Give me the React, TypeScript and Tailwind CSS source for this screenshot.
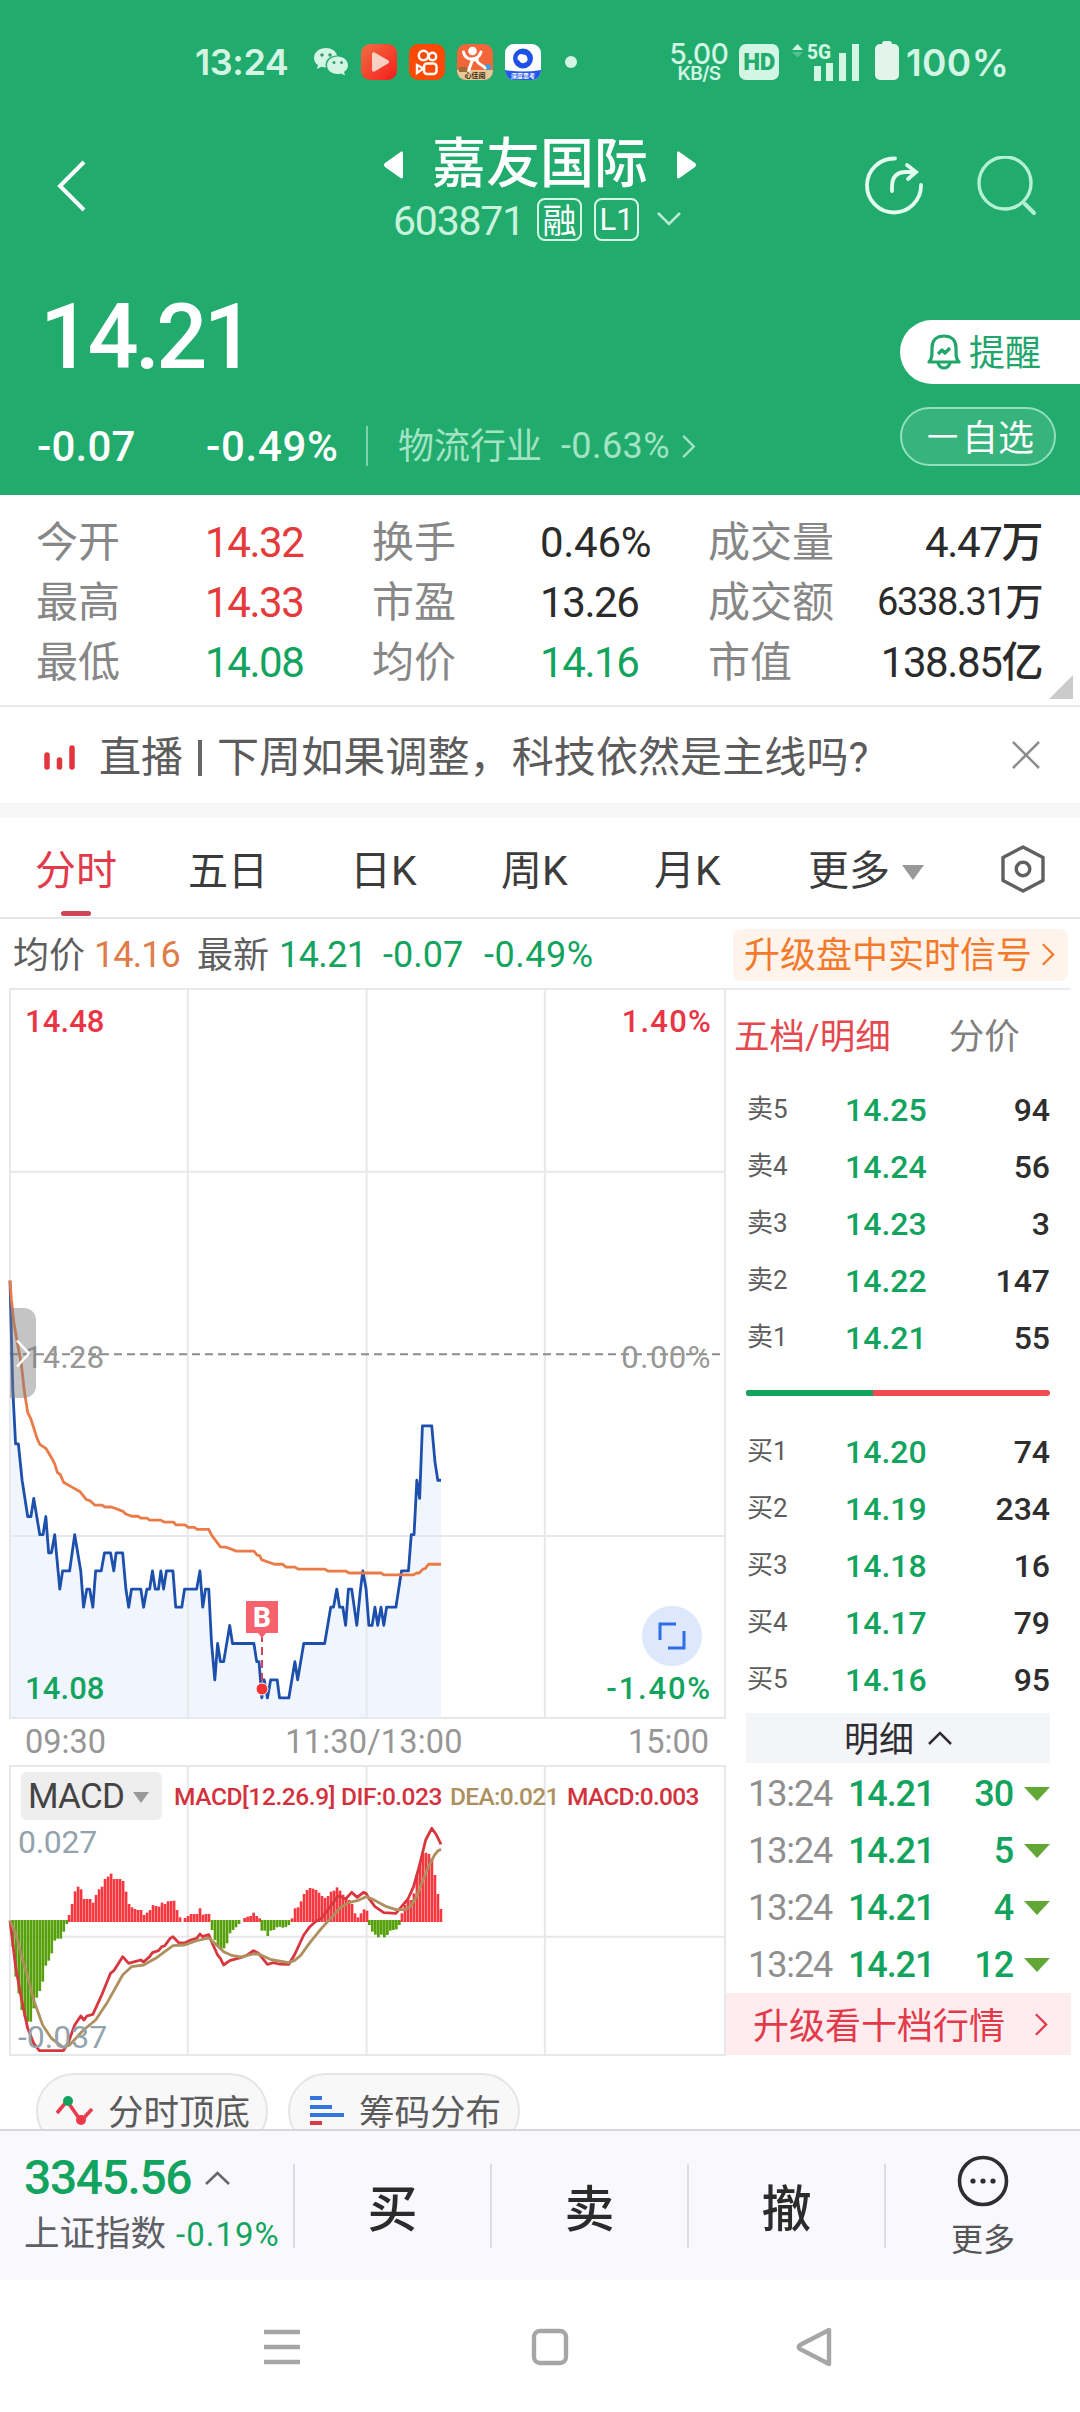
import { clsx } from 'clsx';

type Tone = 'up' | 'down' | 'plain';

const toneClass: Record<Tone, string> = {
  up: 'text-[#e53a3c]',
  down: 'text-[#12a45e]',
  plain: 'text-[#2b2b2b]',
};

const stats: { label: string; value: string; tone: Tone }[][] = [
  [{ label: '今开', value: '14.32', tone: 'up' }, { label: '换手', value: '0.46%', tone: 'plain' }, { label: '成交量', value: '4.47万', tone: 'plain' }],
  [{ label: '最高', value: '14.33', tone: 'up' }, { label: '市盈', value: '13.26', tone: 'plain' }, { label: '成交额', value: '6338.31万', tone: 'plain' }],
  [{ label: '最低', value: '14.08', tone: 'down' }, { label: '均价', value: '14.16', tone: 'down' }, { label: '市值', value: '138.85亿', tone: 'plain' }],
];

const asks = [['卖5', '14.25', '94'], ['卖4', '14.24', '56'], ['卖3', '14.23', '3'], ['卖2', '14.22', '147'], ['卖1', '14.21', '55']];
const bids = [['买1', '14.20', '74'], ['买2', '14.19', '234'], ['买3', '14.18', '16'], ['买4', '14.17', '79'], ['买5', '14.16', '95']];
const ticks = ['30', '5', '4', '12'];

// [x, cents away from the previous close]
const price: [number, number][] = [
  [22, 4], [28, -2], [34, -5], [40, -5], [48, -7], [60, -9], [67, -9], [73, -8], [86, -10], [93, -10], [99, -9], [105, -11], [111, -11], [118, -10],
  [129, -13], [135, -12], [150, -12], [161, -10], [174, -12], [180, -14], [187, -13], [193, -13], [200, -14], [206, -12], [218, -12], [225, -11],
  [238, -11], [245, -12], [250, -11], [264, -11], [271, -13], [277, -14], [283, -13], [303, -13], [309, -14], [316, -13], [322, -13], [328, -12],
  [334, -13], [341, -13], [346, -12], [352, -13], [358, -12], [372, -12], [378, -14], [391, -14], [397, -13], [423, -13], [430, -12], [436, -14],
  [442, -13], [449, -13], [455, -16], [462, -18], [468, -16], [474, -17], [481, -17], [494, -15], [500, -16], [546, -16], [552, -17], [557, -17],
  [563, -19], [568, -18], [575, -19], [582, -18], [596, -18], [601, -19], [621, -19], [634, -17], [640, -18], [653, -16], [698, -16], [711, -14],
  [717, -14], [724, -13], [730, -14], [737, -14], [743, -15], [749, -13], [756, -13], [767, -15], [775, -13], [780, -12], [787, -13], [793, -15], [800, -15],
  [806, -14], [812, -15], [819, -14], [825, -15], [831, -14], [851, -14], [863, -12], [878, -12], [884, -10], [890, -10], [896, -7], [902, -8],
  [908, -4], [928, -4], [935, -6], [941, -7], [948, -7],
];
const priceLine = price.map(([x, c]) => `${x},${770 - c * 37.4}`).join(' ');

const avgLine =
  '22,620 25,660 30,705 40,760 46,790 53,850 60,892 67,906 80,945 86,958 99,966 112,987 118,998 124,1016 130,1020 137,1036 155,1046 172,1055 186,1072 194,1074 204,1083 219,1083 226,1087 240,1087 265,1096 270,1101 283,1106 297,1106 303,1110 316,1110 322,1114 346,1114 353,1118 373,1118 379,1124 398,1124 405,1129 418,1129 424,1133 449,1133 455,1145 474,1169 487,1170 508,1178 546,1178 553,1186 558,1187 563,1196 590,1205 608,1205 615,1211 634,1211 641,1215 698,1215 705,1219 743,1219 750,1223 819,1223 825,1227 888,1227 896,1223 901,1223 909,1215 914,1214 921,1205 948,1205';

const difLine =
  '22,662 34,800 47,900 60,985 73,1030 85,1052 137,1052 148,1025 161,975 174,948 181,960 187,948 200,943 219,885 238,820 245,812 264,770 277,790 290,785 303,780 309,786 322,770 328,758 341,752 348,740 354,738 366,715 372,710 385,729 397,729 410,720 423,715 430,702 436,710 442,707 449,704 455,725 468,765 474,775 481,795 494,782 519,772 532,765 545,752 556,760 575,793 588,788 600,792 621,793 633,765 653,705 665,682 678,665 691,655 711,618 724,592 730,588 737,593 743,597 756,577 768,592 781,577 787,580 793,595 806,620 825,638 851,640 863,620 877,597 889,560 902,495 915,420 928,385 937,402 948,433';
const deaLine =
  '22,662 34,700 47,770 60,830 73,900 92,975 111,1015 137,1043 150,1035 180,990 206,960 232,905 264,825 283,800 309,795 335,775 372,737 397,735 423,722 449,714 462,730 481,755 500,767 519,771 545,762 556,762 581,778 620,788 633,782 646,767 665,730 691,685 711,655 730,625 749,608 768,602 787,590 800,597 831,620 851,629 870,629 883,618 895,590 908,545 921,500 934,465 941,453 948,448';

// runs of histogram bars: first x, then the end of every bar
const histogram: { from: number; ends: number[] }[] = [
  { from: 28, ends: [740, 830, 880, 930, 950, 965, 965, 925, 893, 873, 845, 797, 782, 760, 722, 716, 716, 695, 672] },
  { from: 149, ends: [645, 612, 574, 560, 568, 597, 597, 597, 608, 585, 568, 560, 537, 530, 521, 537, 537, 537, 543, 575, 612, 622, 627, 630, 630, 645, 638, 630, 615, 618, 620, 608, 612, 604, 603, 602, 630, 652] },
  { from: 398, ends: [654, 648, 642, 642, 642, 625, 644, 642, 642] },
  { from: 456, ends: [690, 720, 740, 748, 745, 730, 700, 690, 682, 672] },
  { from: 526, ends: [654, 650, 648, 638, 648, 655] },
  { from: 563, ends: [692, 692, 708, 692, 690, 682, 680, 683, 681, 675] },
  { from: 628, ends: [655, 625, 622, 604, 582, 570, 564, 566, 570, 578, 588, 594, 588, 575, 572, 562, 572, 584, 597, 600, 612, 640, 652, 640, 628, 632] },
  { from: 794, ends: [675, 695, 704, 712, 704, 712, 705, 692, 690, 688, 675] },
  { from: 864, ends: [640, 615, 600, 600, 580, 525, 490, 460, 458, 462, 475, 525, 582, 627] },
];

function Chevron({ className, d = 'M2 2l11 11L2 24', box = '0 0 15 26' }: { className: string; d?: string; box?: string }) {
  return (
    <svg viewBox={box} className={clsx('shrink-0', className)} fill="none" stroke="currentColor" strokeWidth="2.5">
      <path d={d} />
    </svg>
  );
}

function StatusBar() {
  return (
    <div className="flex h-[124px] items-center pl-[195px] text-[#d3f5e3]">
      <span className="w-[119px] font-['Inter'] text-[36px] leading-none font-semibold tracking-[-0.4px]">13:24</span>
      <svg width="35" height="30" viewBox="0 0 35 30" className="shrink-0" fill="currentColor">
        <path d="M12 1C5.500 1 0 5 0 11c0 3 1.600 5.400 4 7l-1 4 4.500-2.200c1.500.4 3 .6 4.500.6-2-6.500 3.500-12 11-12C22 4 17.500 1 12 1z" />
        <path d="M23.500 9.500c-6 0-10.500 4-10.500 8.800 0 5 4.500 8.700 10.500 8.700 1.200 0 2.500-.2 3.600-.6L31 28.500l-1-3.500c2.500-1.600 4-4 4-6.700 0-4.800-4.500-8.800-10.500-8.800z" />
        <g fill="#3d9a70">
          <circle cx="8" cy="8" r="1.800" />
          <circle cx="16" cy="8" r="1.800" />
          <circle cx="20" cy="15.500" r="1.500" />
          <circle cx="27.500" cy="15.500" r="1.500" />
        </g>
      </svg>
      <svg width="36" height="36" viewBox="0 0 36 36" className="ml-[12px] shrink-0">
        <defs>
          <linearGradient id="play" x1="0" y1="0" x2="1" y2="1">
            <stop offset="0" stopColor="#ef7043" />
            <stop offset="1" stopColor="#f61c1c" />
          </linearGradient>
        </defs>
        <rect width="36" height="36" rx="9" fill="url(#play)" />
        <path d="M11 10.500c0-2 1.500-2.600 3-1.800l13 7.500c1.500 1 1.500 2.400 0 3.300l-13 7.800c-1.500.9-3 .2-3-1.500z" fill="#fbd0c4" />
      </svg>
      <svg width="36" height="36" viewBox="0 0 36 36" className="ml-[12px] shrink-0">
        <rect width="36" height="36" rx="9" fill="#fc4a05" />
        <g fill="none" stroke="#fff" strokeWidth="2.400">
          <circle cx="14.500" cy="11.500" r="4.700" />
          <circle cx="23.500" cy="12.500" r="3.700" />
          <rect x="15" y="19.500" width="12.500" height="10.500" rx="3" />
          <path d="M14.500 24.500L8 21v8z" />
        </g>
      </svg>
      <svg width="36" height="36" viewBox="0 0 36 36" className="ml-[12px] shrink-0">
        <rect width="36" height="36" rx="9" fill="#f2663a" />
        <path d="M0 26h36v1a9 9 0 0 1-9 9H9a9 9 0 0 1-9-9z" fill="#e8c796" />
        <path d="M2 23h8v5H2z" fill="#9b6b3a" />
        <circle cx="31" cy="23" r="3" fill="#3f9fd8" />
        <circle cx="15.500" cy="7" r="4.300" fill="#fff" />
        <path d="M6.500 8c1 5 4 7 8 7s8-2 9.500-7M12 26c1-5 3-7 3-10h5c0 4 6 5 8 8" fill="none" stroke="#fff" strokeWidth="3" strokeLinecap="round" />
        <text x="18" y="34" fontSize="7" fontWeight="700" textAnchor="middle" fill="#3a2a14">心佳阅</text>
      </svg>
      <svg width="36" height="36" viewBox="0 0 36 36" className="ml-[12px] shrink-0">
        <rect width="36" height="36" rx="9" fill="#fff" />
        <path d="M0 26q18 3 36 0v1a9 9 0 0 1-9 9H9a9 9 0 0 1-9-9z" fill="#2558e8" />
        <circle cx="18" cy="14.500" r="10" fill="#1d52e6" />
        <path d="M18 10.500a4.300 4.300 0 1 1-3.500 6.500 3.500 3.500 0 0 1 3.500-6.500z" fill="#fff" />
        <text x="18" y="34" fontSize="6" fontWeight="700" textAnchor="middle" fill="#fff">深度思考</text>
      </svg>
      <i className="ml-6 size-3 shrink-0 rounded-full bg-[#d3f5e3]" />
      <div className="ml-[91px] flex w-[62px] flex-col items-center font-['Inter'] font-semibold">
        <span className="text-[28px] leading-[22px] font-medium tracking-[-0.400px]">5.00</span>
        <span className="text-[19px] leading-[17px] tracking-[-0.600px]">KB/S</span>
      </div>
      <span className="ml-[9px] flex h-9 w-10 items-center justify-center rounded-[7px] bg-[#d3f5e3] text-[24px] leading-none font-black tracking-[-0.500px] text-[#21ac6e]">HD</span>
      <svg width="68" height="38" viewBox="0 0 68 38" className="ml-[13px] shrink-0 overflow-visible" fill="currentColor">
        <path d="M0 7l5.500-6L11 7z" />
        <path d="M0 9h11l-5.500 5.500z" opacity=".3" />
        <text x="15" y="15.500" fontSize="20" fontWeight="800" textLength="24" lengthAdjust="spacingAndGlyphs">5G</text>
        <path d="M22 23h7v15h-7zM34 20h7v18h-7zM47 10h7v28h-7zM60 1h7v37h-7z" />
      </svg>
      <svg width="24" height="39" viewBox="0 0 24 39" className="-mt-1 ml-[15px] shrink-0" fill="#e3f5ea">
        <rect x="7" width="10" height="8" rx="3" />
        <rect y="3" width="24" height="36" rx="5" />
      </svg>
      <span className="ml-[7px] font-['Inter'] text-[37px] leading-none font-semibold tracking-[0.400px]">100%</span>
    </div>
  );
}

function Header() {
  return (
    <header className="flex h-[495px] flex-col bg-[#21ac6e] text-white">
      <StatusBar />
      <div className="flex h-[124px] items-center">
        <svg width="30" height="52" viewBox="0 0 30 52" className="ml-14 shrink-0" fill="none" stroke="currentColor" strokeWidth="4">
          <path d="M28 2L4 26l24 24" />
        </svg>
        <div className="ml-[298px] flex w-[312px] shrink-0 flex-col">
          <div className="flex h-[66px] items-center justify-between pt-[16px]">
            <svg width="19" height="28" viewBox="0 0 19 28" className="shrink-0" fill="currentColor">
              <path d="M19 2v24c0 1-1 2-2.500 1L1 16c-1.300-1-1.300-3 0-4L16.500 1c1.500-1 2.500 0 2.500 1z" />
            </svg>
            <h1 className="text-[54px] leading-[56px] font-medium">嘉友国际</h1>
            <svg width="19" height="28" viewBox="0 0 19 28" className="shrink-0" fill="currentColor">
              <path d="M0 2v24c0 1 1 2 2.500 1L18 16c1.300-1 1.300-3 0-4L2.500 1C1 0 0 1 0 2z" />
            </svg>
          </div>
          <div className="flex h-[58px] items-center pl-[9px]">
            <span className="w-[144px] pt-1 text-[41px] leading-none tracking-[-1.200px] text-[#c9f3dd]">603871</span>
            <span className="flex h-[43px] w-[45px] items-center justify-center rounded-lg border-2 border-[#d9f7e7] pt-[3px] text-[34px] leading-none">融</span>
            <span className="ml-3 flex h-[43px] w-[45px] items-center justify-center rounded-lg border-2 border-[#d9f7e7] text-[31px] leading-none">L1</span>
            <Chevron className="ml-[17px] h-[14px] w-[26px] text-[#b9ecd3]" d="M2 1l11 11L24 1" box="0 0 26 14" />
          </div>
        </div>
        <svg width="60" height="60" viewBox="0 0 60 60" className="ml-[168px] shrink-0" fill="none" stroke="#e2fbee" strokeWidth="3.800" strokeLinecap="round">
          <path d="M31 2.500A27 27 0 1 0 57 29M28 35v-4q0-15 14-15h9M43 9l9 7-8 7" />
        </svg>
        <svg width="60" height="60" viewBox="0 0 60 60" className="ml-[53px] shrink-0" fill="none" stroke="#b4f0d2" strokeWidth="3.400" strokeLinecap="round">
          <circle cx="28" cy="27" r="26" />
          <path d="M48 48l9 9" strokeWidth="4" />
        </svg>
      </div>

      <div className="flex flex-1">
        <div className="flex flex-1 flex-col">
          <strong className="mt-[45px] ml-[40px] text-[90px] leading-[90px] font-medium tracking-[-3.700px]">14.21</strong>
          <div className="mt-[33px] flex h-[60px] items-center pl-[37px] text-[42px] font-medium">
            <span className="w-[169px] tracking-[0.200px]">-0.07</span>
            <span className="w-[160px] tracking-[0.700px]">-0.49%</span>
            <i className="h-10 w-[2px] bg-[#7fd3ac]" />
            <span className="ml-[30px] pt-[2px] text-[36px] font-normal text-[#a2e3c3]">物流行业</span>
            <span className="ml-[19px] w-[113px] text-[36px] font-normal tracking-[0.400px] text-[#a2e3c3]">-0.63%</span>
            <Chevron className="ml-[7px] h-[25px] w-[15px] text-[#a2e3c3]" />
          </div>
        </div>
        <div className="flex w-[180px] flex-col pt-[72px]">
          <button className="flex h-[64px] items-center rounded-l-full bg-white pl-[27px] text-[36px] text-[#21a56a]">
            <svg width="34" height="36" viewBox="0 0 34 36" fill="none" stroke="currentColor" strokeWidth="3.200" strokeLinejoin="round">
              <path d="M2 28c3-3 3-6 3-14C5 6 10 2 17 2s12 4 12 12c0 8 0 11 3 14zM2 28h30M11 29c1 3 3 5 6 5s5-2 6-5M11 20l4-4 3 3 5-5" />
            </svg>
            <span className="ml-2 pt-[3px]">提醒</span>
          </button>
          <button className="mt-[23px] flex h-[59px] w-[156px] items-center rounded-full border-2 border-[#93dfbb] bg-[#37b37c] pt-[4px] pl-[25px] text-[36px]">
            <span className="text-[31px]">一</span>
            <span className="ml-[4px]">自选</span>
          </button>
        </div>
      </div>
    </header>
  );
}

function Stats() {
  return (
    <section className="flex h-[212px] flex-col border-b-2 border-[#e9e9eb] pt-[17px]">
      {stats.map((row, i) => (
        <div key={row[0].label} className="flex h-[60px] items-center pr-[38px] pl-[36px] text-[42px]">
          {row.map((cell, j) => (
            <div key={cell.label} className={clsx('flex items-center', j === 0 && 'w-[336px]', j === 1 && 'w-[336px]', j === 2 && 'flex-1 justify-between')}>
              <span className={clsx('text-[#878787]', j === 0 && 'w-[169px]', j === 1 && 'w-[168px]')}>{cell.label}</span>
              <span
                className={clsx(
                  'font-[450]',
                  toneClass[cell.tone],
                  cell.value.endsWith('%') ? 'tracking-[-0.300px]' : 'tracking-[-1.400px]',
                  i === 1 && j === 2 && 'text-[38px]',
                )}
              >
                {cell.value}
              </span>
            </div>
          ))}
        </div>
      ))}
      <svg width="24" height="24" viewBox="0 0 24 24" className="-mt-[17px] mr-[7px] shrink-0 self-end" fill="#cbcbcb">
        <path d="M24 0v24H0z" />
      </svg>
    </section>
  );
}

function Notice() {
  return (
    <section className="flex h-[111px] items-center border-b-[15px] border-[#f7f7f7] pt-[5px] pl-[44px] text-[42px] text-[#5c5c5c]">
      <svg width="31" height="27" viewBox="0 0 31 27" className="shrink-0" fill="none" stroke="#e2363c" strokeWidth="5.500" strokeLinecap="round">
        <path d="M3 11v12M15.500 16v7M28 4v19" />
      </svg>
      <span className="ml-[24px]">直播</span>
      <i className="mx-[15px] h-9 w-[4px] bg-[#666]" />
      <span className="tracking-[0.100px]">下周如果调整，科技依然是主线吗?</span>
      <svg width="28" height="28" viewBox="0 0 28 28" className="mr-10 mb-[5px] ml-auto shrink-0" stroke="#8d8d8d" strokeWidth="2.500">
        <path d="M1 1l26 26M27 1L1 27" />
      </svg>
    </section>
  );
}

function Tabs() {
  return (
    <nav className="flex h-[101px] items-center border-b-2 border-[#e6e6e8] pt-[9px] text-[41px] text-[#3c3c3c]">
      <button className="relative ml-[35px] w-[153px] text-left text-[#e23a4a]">
        分时
        <i className="absolute top-[70px] left-[26px] h-[5px] w-[30px] rounded-sm bg-[#d04456]" />
      </button>
      <span className="w-[162px] text-[40px]">五日</span>
      <span className="w-[151px]">日K</span>
      <span className="w-[153px]">周K</span>
      <span className="w-[154px]">月K</span>
      <span>更多</span>
      <svg width="22" height="15" viewBox="0 0 22 15" className="ml-[12px]" fill="#999">
        <path d="M0 0h22L11 15z" />
      </svg>
      <svg width="44" height="48" viewBox="0 0 44 48" className="mb-[6px] ml-[77px]" fill="none" stroke="#606060" strokeWidth="3.400" strokeLinejoin="round">
        <path d="M22 2l20 10.500v23L22 46 2 35.500v-23z" />
        <circle cx="22" cy="24" r="6.800" />
      </svg>
    </nav>
  );
}

function QuoteLine() {
  return (
    <div className="flex h-[69px] items-center pt-[2px] pr-3 pl-[13px] text-[36px]">
      <span className="pt-[2px] text-[#5e5e5e]">均价</span>
      <span className="w-[112px] pl-[9px] tracking-[-0.900px] text-[#de7c4a]">14.16</span>
      <span className="pt-[2px] text-[#5e5e5e]">最新</span>
      <span className="w-[114px] pl-[10px] font-[450] tracking-[-0.600px] text-[#12a45e]">14.21</span>
      <span className="w-[101px] font-[450] text-[#12a45e]">-0.07</span>
      <span className="font-[450] tracking-[0.500px] text-[#12a45e]">-0.49%</span>
      <button className="ml-auto flex h-[52px] w-[335px] items-center rounded-lg bg-[#fff4ec] pl-[11px] text-[#f37a2b]">
        <span className="pt-[3px]">升级盘中实时信号</span>
        <Chevron className="ml-[9px] h-[25px] w-[14px]" />
      </button>
    </div>
  );
}

function PriceChart() {
  return (
    <div className="relative h-[729px] w-[715px]">
      <svg viewBox="22 19 1536 1503" preserveAspectRatio="none" width="715" height="729" fill="none" className="overflow-visible">
        <polygon points={`22,1522 ${priceLine} 948,1522`} fill="#f0f5fe" />
        <path d="M22 19H1558V1522H22zM22 396H1558M22 1147H1558M404 19V1522M788 19V1522M1171 19V1522" stroke="#e7e8ea" strokeWidth="2" vectorEffect="non-scaling-stroke" />
        <path d="M22 772H1558" stroke="#8c8c8c" strokeWidth="1.800" strokeDasharray="8 5" vectorEffect="non-scaling-stroke" />
        <polyline points={priceLine} stroke="#1c50ac" strokeWidth="2.800" strokeLinejoin="round" vectorEffect="non-scaling-stroke" />
        <polyline points={avgLine} stroke="#ea7b46" strokeWidth="2.800" strokeLinejoin="round" vectorEffect="non-scaling-stroke" />
      </svg>
      <div className="absolute inset-0 flex flex-col justify-between pt-[15px] pr-[13px] pb-[11px] pl-[15px] text-[31px] leading-[36px]">
        <div className="flex justify-between font-medium text-[#e93546]"><span className="tracking-[0.100px]">14.48</span><span className="tracking-[1.200px]">1.40%</span></div>
        <div className="flex translate-y-[2px] justify-between text-[#979797]"><span className="tracking-[0.300px]">14.28</span><span className="tracking-[1.500px]">0.00%</span></div>
        <div className="flex justify-between font-medium text-[#12a45e]"><span className="tracking-[0.100px]">14.08</span><span className="tracking-[1.800px]">-1.40%</span></div>
      </div>
      <div className="absolute top-[319px] left-0 flex h-[90px] w-[26px] items-center rounded-r-[12px] bg-[#7d7d7d]/45">
        <Chevron className="ml-[6px] h-[31px] w-[15px] text-white" d="M1 1l12 13L1 27" box="0 0 15 28" />
      </div>
      <svg width="34" height="100" viewBox="0 0 34 100" className="absolute top-[611px] left-[235px]">
        <path d="M17 34v54" stroke="#d8405a" strokeWidth="2" strokeDasharray="8 5" />
        <path d="M1 1h32v32H21l-4 5-4-5H1z" fill="#f5616d" />
        <text x="17" y="27" fontSize="28" fontWeight="800" textAnchor="middle" fill="#fff">B</text>
        <circle cx="17" cy="89" r="6" fill="#f23434" stroke="#fff" />
      </svg>
      <div className="absolute top-[617px] right-[23px] flex size-[60px] items-center justify-center rounded-full bg-[#dee8fc]">
        <svg width="28" height="28" viewBox="0 0 28 28" fill="none" stroke="#2f6fe4" strokeWidth="3">
          <path d="M2 18V2h16M26 9v17H10" />
        </svg>
      </div>
    </div>
  );
}

function MacdChart() {
  return (
    <div className="relative h-[289px] w-[715px]">
      <svg viewBox="22 198 1536 867" preserveAspectRatio="none" width="715" height="289" fill="none" className="overflow-visible">
        <path d="M22 198H1558V1065H22zM22 710H1558M404 198V1065M788 198V1065M1171 198V1065" stroke="#e7e8ea" strokeWidth="2" vectorEffect="non-scaling-stroke" />
        {histogram.map(({ from, ends }) =>
          ends.map((end, i) => (
            <rect
              key={`${from}-${i}`}
              x={from + i * 6.44 - 2.9}
              y={end > 662 ? 660 : end}
              width="5.800"
              height={end > 662 ? end - 660 : 666 - end}
              fill={end > 662 ? '#56a00c' : '#f5383f'}
            />
          )),
        )}
        <polyline points={difLine} stroke="#d8373f" strokeWidth="2.800" strokeLinejoin="round" vectorEffect="non-scaling-stroke" />
        <polyline points={deaLine} stroke="#ad905e" strokeWidth="2.800" strokeLinejoin="round" vectorEffect="non-scaling-stroke" />
      </svg>
      <div className="absolute inset-x-0 top-[6px] flex items-center text-[24.500px] font-medium whitespace-pre">
        <button className="ml-[11px] flex h-[48px] w-[141px] items-center rounded-md bg-[#eeeeef] pt-[3px] pl-[7px] text-[35px] font-normal tracking-[-0.800px] text-[#444]">
          MACD
          <svg width="16" height="11" viewBox="0 0 16 11" className="ml-[9px]" fill="#999">
            <path d="M0 0h16L8 11z" />
          </svg>
        </button>
        <span className="ml-[12px] w-[167px] pt-[2px] tracking-[-0.400px] text-[#d3323c]">MACD[12.26.9]</span>
        <span className="w-[109px] pt-[2px] tracking-[-0.500px] text-[#d3323c]">DIF:0.023</span>
        <span className="w-[117px] pt-[2px] tracking-[-0.700px] text-[#ad905e]">DEA:0.021</span>
        <span className="pt-[2px] tracking-[-0.700px] text-[#d3323c]">MACD:0.003</span>
      </div>
      <span className="absolute top-[57px] left-2 text-[32px] leading-[38px] tracking-[-0.300px] text-[#93a3ae]">0.027</span>
      <span className="absolute top-[252px] left-2 text-[32px] leading-[38px] text-[#93a3ae]">-0.037</span>
    </div>
  );
}

function Level({ row }: { row: string[] }) {
  return (
    <div className="flex h-[57px] items-center pr-[21px] pl-[22px] text-[32px] font-medium">
      <span className="w-[98px] text-[26px] font-normal text-[#5c5c5c]">{row[0]}</span>
      <span className="text-[#12a45e]">{row[1]}</span>
      <span className="ml-auto text-[#2e2e2e]">{row[2]}</span>
    </div>
  );
}

function OrderBook() {
  return (
    <aside className="flex h-[1067px] w-[346px] flex-col border-t-2 border-[#e7ecf3]">
      <div className="flex h-[91px] items-center pt-[5px] pl-[9px] text-[35.500px]">
        <span className="text-[#e4494f]">五档/明细</span>
        <span className="ml-[58px] text-[#808080]">分价</span>
      </div>
      {asks.map((row) => <Level key={row[0]} row={row} />)}
      <div className="mx-[21px] mt-[24px] mb-[27px] flex h-[6px] shrink-0 overflow-hidden rounded-full bg-[#f04b50]">
        <i className="w-[127px] bg-[#12a45e]" />
      </div>
      {bids.map((row) => <Level key={row[0]} row={row} />)}
      <button className="mx-[21px] mt-[5px] mb-[2px] flex h-[50px] shrink-0 items-center justify-center bg-[#f3f5f9] text-[35px] text-[#2f2f33]">
        <span className="pt-[6px]">明细</span>
        <Chevron className="ml-[14px] h-[14px] w-[24px]" d="M1 13L12 2l11 11" box="0 0 24 14" />
      </button>
      {ticks.map((qty, i) => (
        <div key={i} className="flex h-[57px] shrink-0 items-center pr-[21px] pl-[23px] text-[36px] tracking-[-1.100px]">
          <span className="w-[100px] text-[#8f8f8f]">13:24</span>
          <span className="font-medium text-[#12a45e]">14.21</span>
          <span className="ml-auto font-medium text-[#12a45e]">{qty}</span>
          <svg width="26" height="14" viewBox="0 0 26 14" className="ml-[11px]" fill="#62a736">
            <path d="M0 0h26L13 14z" />
          </svg>
        </div>
      ))}
      <button className="mt-auto flex h-[62px] shrink-0 items-center bg-[#ffecee] pl-[28px] text-[36px] text-[#e23a4a]">
        <span className="pt-[5px]">升级看十档行情</span>
        <Chevron className="ml-[29px] h-[25px] w-[14px]" />
      </button>
    </aside>
  );
}

function ChipRow() {
  return (
    <div className="flex h-[74px] items-start gap-5 overflow-hidden pt-[18px] pl-9 text-[35.500px] text-[#5b5b5b]">
      <button className="flex h-[76px] w-[232px] shrink-0 items-center rounded-full border-2 border-[#e5e5e5] bg-[#f8f8f8] pl-[17px]">
        <svg width="39" height="32" viewBox="0 0 39 32" fill="none" stroke="#e83b4c" strokeWidth="3.600">
          <path d="M2 18l10-12L26 26l11-12" />
          <circle cx="13" cy="6" r="5" fill="#12a45e" stroke="none" />
          <circle cx="26" cy="25" r="5" fill="#f0384a" stroke="none" />
        </svg>
        <span className="ml-[14px] pt-[5px]">分时顶底</span>
      </button>
      <button className="flex h-[76px] w-[232px] shrink-0 items-center rounded-full border-2 border-[#e5e5e5] bg-[#f8f8f8] pl-5">
        <svg width="34" height="30" viewBox="0 0 34 30" strokeWidth="4">
          <path d="M0 2h12M0 11h22M0 19h34" stroke="#3474dd" />
          <path d="M0 27h12" stroke="#d93a45" />
        </svg>
        <span className="ml-[15px] pt-[5px]">筹码分布</span>
      </button>
    </div>
  );
}

function TradeBar() {
  return (
    <footer className="flex h-[151px] shrink-0 items-center border-t-2 border-[#d6d6de] bg-[#f9f9fd]">
      <div className="flex w-[293px] flex-col pb-[5px] pl-[24px]">
        <div className="flex h-[63px] items-center text-[48px] font-medium tracking-[-1.400px] text-[#12a45e]">
          3345.56
          <Chevron className="ml-[14px] h-[14px] w-[25px] text-[#666]" d="M1 13L12.500 2 24 13" box="0 0 25 14" />
        </div>
        <div className="flex h-[50px] items-center text-[35.500px] whitespace-nowrap text-[#5f5f66]">
          上证指数
          <span className="ml-[10px] text-[33px] tracking-[1px] text-[#12a45e]">-0.19%</span>
        </div>
      </div>
      {['买', '卖', '撤'].map((label) => (
        <button key={label} className="h-[84px] w-[197px] border-l-2 border-[#dcdce4] pt-[4px] text-[50px] leading-[84px] font-medium text-[#2b2b2b]">
          {label}
        </button>
      ))}
      <div className="flex h-[84px] flex-1 flex-col items-center justify-center border-l-2 border-[#dcdce4] text-[32px] leading-none text-[#555]">
        <svg width="52" height="52" viewBox="0 0 52 52" className="shrink-0" fill="none" stroke="#2e2e2e" strokeWidth="3.600">
          <circle cx="26" cy="26" r="23.500" />
          <g fill="#2e2e2e" stroke="none">
            <circle cx="16" cy="26" r="2.600" />
            <circle cx="26" cy="26" r="2.600" />
            <circle cx="36" cy="26" r="2.600" />
          </g>
        </svg>
        <span className="mt-[17px]">更多</span>
      </div>
    </footer>
  );
}

function SystemNav() {
  return (
    <div className="flex h-[132px] items-center pt-px pl-[264px]">
      <svg width="36" height="36" viewBox="0 0 36 36" stroke="#a6a6a6" strokeWidth="4.500">
        <path d="M0 3h36M0 18h36M0 33h36" />
      </svg>
      <svg width="38" height="38" viewBox="0 0 38 38" className="ml-[231px]" fill="none" stroke="#a6a6a6" strokeWidth="4.400">
        <rect x="3" y="3" width="32" height="32" rx="6" />
      </svg>
      <svg width="38" height="42" viewBox="0 0 38 42" className="ml-[226px]" fill="none" stroke="#a6a6a6" strokeWidth="4.400" strokeLinejoin="round">
        <path d="M34 4v34L5 23q-2.500-2 0-4z" />
      </svg>
    </div>
  );
}

export default function App() {
  return (
    <div className="h-[2412px] w-[1080px] overflow-hidden bg-white font-['Roboto','Noto_Sans_CJK_SC',sans-serif]">
      <Header />
      <Stats />
      <Notice />
      <Tabs />
      <QuoteLine />
      <main className="flex h-[1067px] pl-[10px]">
        <div className="flex w-[715px] shrink-0 flex-col pt-[1px]">
          <PriceChart />
          <div className="flex h-[48px] items-center justify-between pt-px pr-[16px] pl-[15px] text-[32.500px] text-[#969696]">
            <span>09:30</span>
            <span className="ml-[14px] tracking-[0.200px]">11:30/13:00</span>
            <span>15:00</span>
          </div>
          <MacdChart />
        </div>
        <OrderBook />
      </main>
      <ChipRow />
      <TradeBar />
      <SystemNav />
    </div>
  );
}
